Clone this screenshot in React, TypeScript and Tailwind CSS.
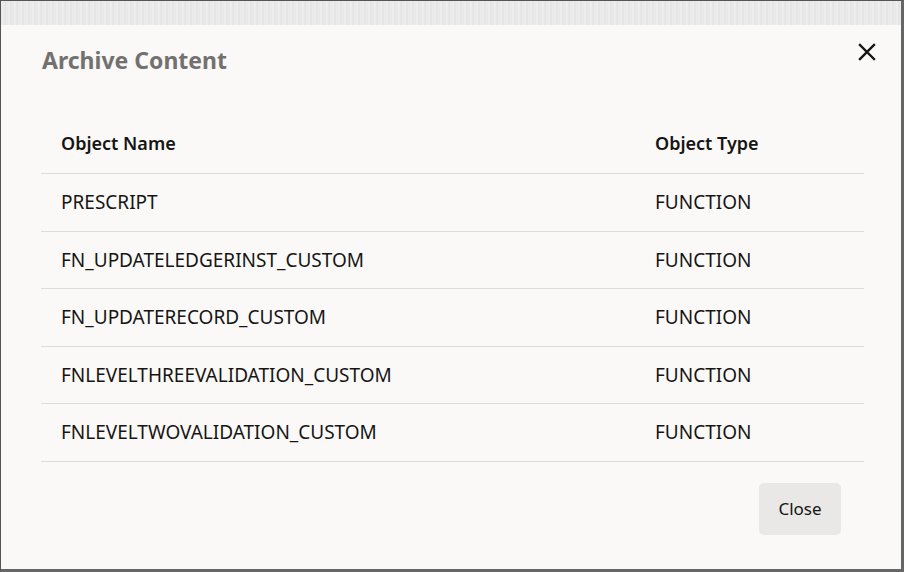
const rows = [
  { name: 'PRESCRIPT', type: 'FUNCTION' },
  { name: 'FN_UPDATELEDGERINST_CUSTOM', type: 'FUNCTION' },
  { name: 'FN_UPDATERECORD_CUSTOM', type: 'FUNCTION' },
  { name: 'FNLEVELTHREEVALIDATION_CUSTOM', type: 'FUNCTION' },
  { name: 'FNLEVELTWOVALIDATION_CUSTOM', type: 'FUNCTION' },
];

export default function App() {
  return (
    <div className="w-[904px] h-[572px] border border-[#555] border-r-[3px] border-b-[3px] border-r-[#666] border-b-[#666] bg-[#faf9f8] flex flex-col font-['Noto_Sans',sans-serif] text-[#161513]">
      {/* grey strip over the top */}
      <div className="h-[24px] shrink-0 bg-[repeating-linear-gradient(90deg,#e6e6e6_0px,#efefef_2px,#e3e3e3_4px,#ededed_6px)]" />

      <div className="flex items-start justify-between pl-[41px] pr-[25px] pt-[20px]">
        <h1 className="text-[23px] font-bold text-[#737170] leading-[30px]">Archive Content</h1>
        <button className="-mt-[2px] text-[#161513]" aria-label="Close dialog">
          <svg width="18" height="18" viewBox="0 0 18 18" fill="none" stroke="currentColor" strokeWidth="2.4" strokeLinecap="square">
            <path d="M2 2L16 16M16 2L2 16" />
          </svg>
        </button>
      </div>

      <div className="ml-[40px] mt-[42px] w-[823px]">
        <div className="flex h-[57px] items-start pt-[13px] border-b border-[#dedcd9] text-[18px] font-semibold">
          <div className="w-[594px] pl-[20px]">Object Name</div>
          <div className="pl-[20px]">Object Type</div>
        </div>
        {rows.map((r) => (
          <div key={r.name} className="flex h-[57.6px] items-center border-b border-[#dedcd9] text-[19px]">
            <div className="w-[594px] pl-[20px]">{r.name}</div>
            <div className="pl-[20px]">{r.type}</div>
          </div>
        ))}
      </div>

      <div className="flex justify-end pr-[60px] pt-[21px]">
        <button className="w-[82px] h-[52px] rounded-[5px] bg-[#e9e8e6] text-[17px]">Close</button>
      </div>
    </div>
  );
}
